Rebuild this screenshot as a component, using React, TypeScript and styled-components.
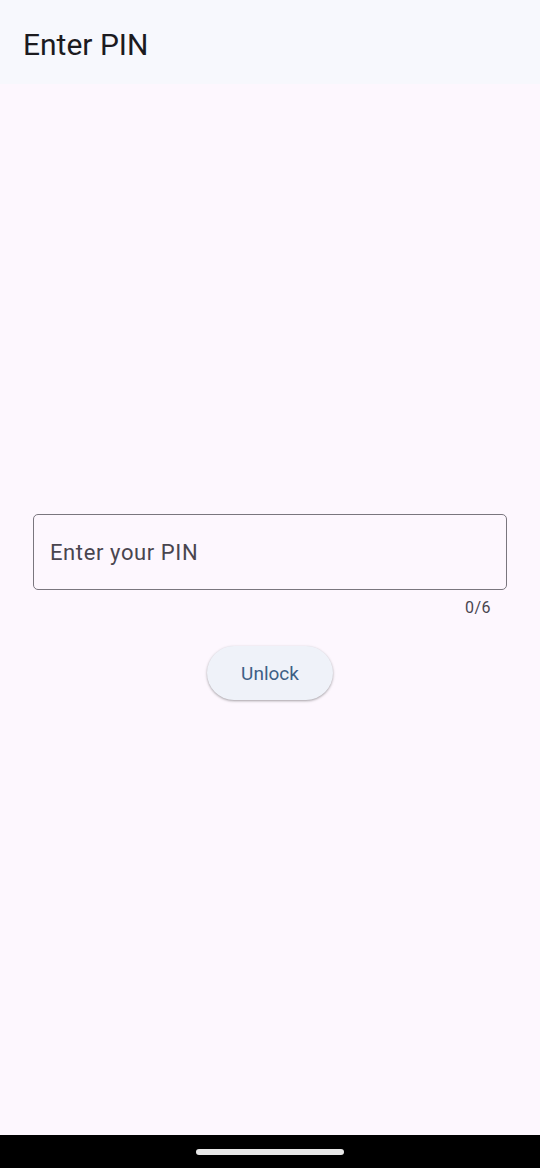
import React from "react";
import styled, { createGlobalStyle } from "styled-components";

const Global = createGlobalStyle`
  html, body { margin: 0; padding: 0; }
  body { font-family: Roboto, "Noto Sans", sans-serif; background: #fdf7fe; }
  #root { height: 1168px; }
`;

const Screen = styled.div`
  width: 540px;
  height: 1168px;
  display: flex;
  flex-direction: column;
  background: #fdf7fe;
`;

const AppBar = styled.header`
  height: 84px;
  flex: none;
  background: #f7f8fd;
  display: flex;
  align-items: center;
  padding: 4px 23px 0;
  box-sizing: border-box;
`;

const Title = styled.h1`
  margin: 0;
  font-size: 30px;
  font-weight: 400;
  color: #1c1b1f;
`;

const Main = styled.main`
  flex: 1;
  display: flex;
  flex-direction: column;
  align-items: center;
  justify-content: center;
  padding: 0 33px 5px;
`;

const Field = styled.div`
  width: 100%;
  display: flex;
  flex-direction: column;
`;

const InputBox = styled.div`
  height: 76px;
  border: 1.5px solid #7a767e;
  border-radius: 5px;
  box-sizing: border-box;
  display: flex;
  align-items: center;
  padding: 0 16px;
`;

const Placeholder = styled.span`
  font-size: 22px;
  color: #49454f;
  letter-spacing: 0.6px;
`;

const Counter = styled.span`
  align-self: flex-end;
  margin-right: 16px;
  margin-top: 8px;
  font-size: 16px;
  color: #49454f;
  letter-spacing: 0.5px;
`;

const Button = styled.button`
  margin-top: 29px;
  width: 126px;
  height: 54px;
  border: none;
  border-radius: 27px;
  background: #eff2f9;
  color: #3e5f86;
  font-family: Roboto, sans-serif;
  font-size: 19px;
  font-weight: 400;
  box-shadow: 0 1px 3px rgba(0, 0, 0, 0.25), 0 1px 2px rgba(0, 0, 0, 0.12);
`;

const NavBar = styled.div`
  height: 33px;
  flex: none;
  background: #000;
  display: flex;
  align-items: center;
  justify-content: center;
`;

const Handle = styled.div`
  width: 148px;
  height: 6px;
  border-radius: 3px;
  background: #e8e8e8;
`;

export default function App() {
  return (
    <>
      <Global />
      <Screen>
        <AppBar>
          <Title>Enter PIN</Title>
        </AppBar>
        <Main>
          <Field>
            <InputBox>
              <Placeholder>Enter your PIN</Placeholder>
            </InputBox>
            <Counter>0/6</Counter>
          </Field>
          <Button>Unlock</Button>
        </Main>
        <NavBar>
          <Handle />
        </NavBar>
      </Screen>
    </>
  );
}
